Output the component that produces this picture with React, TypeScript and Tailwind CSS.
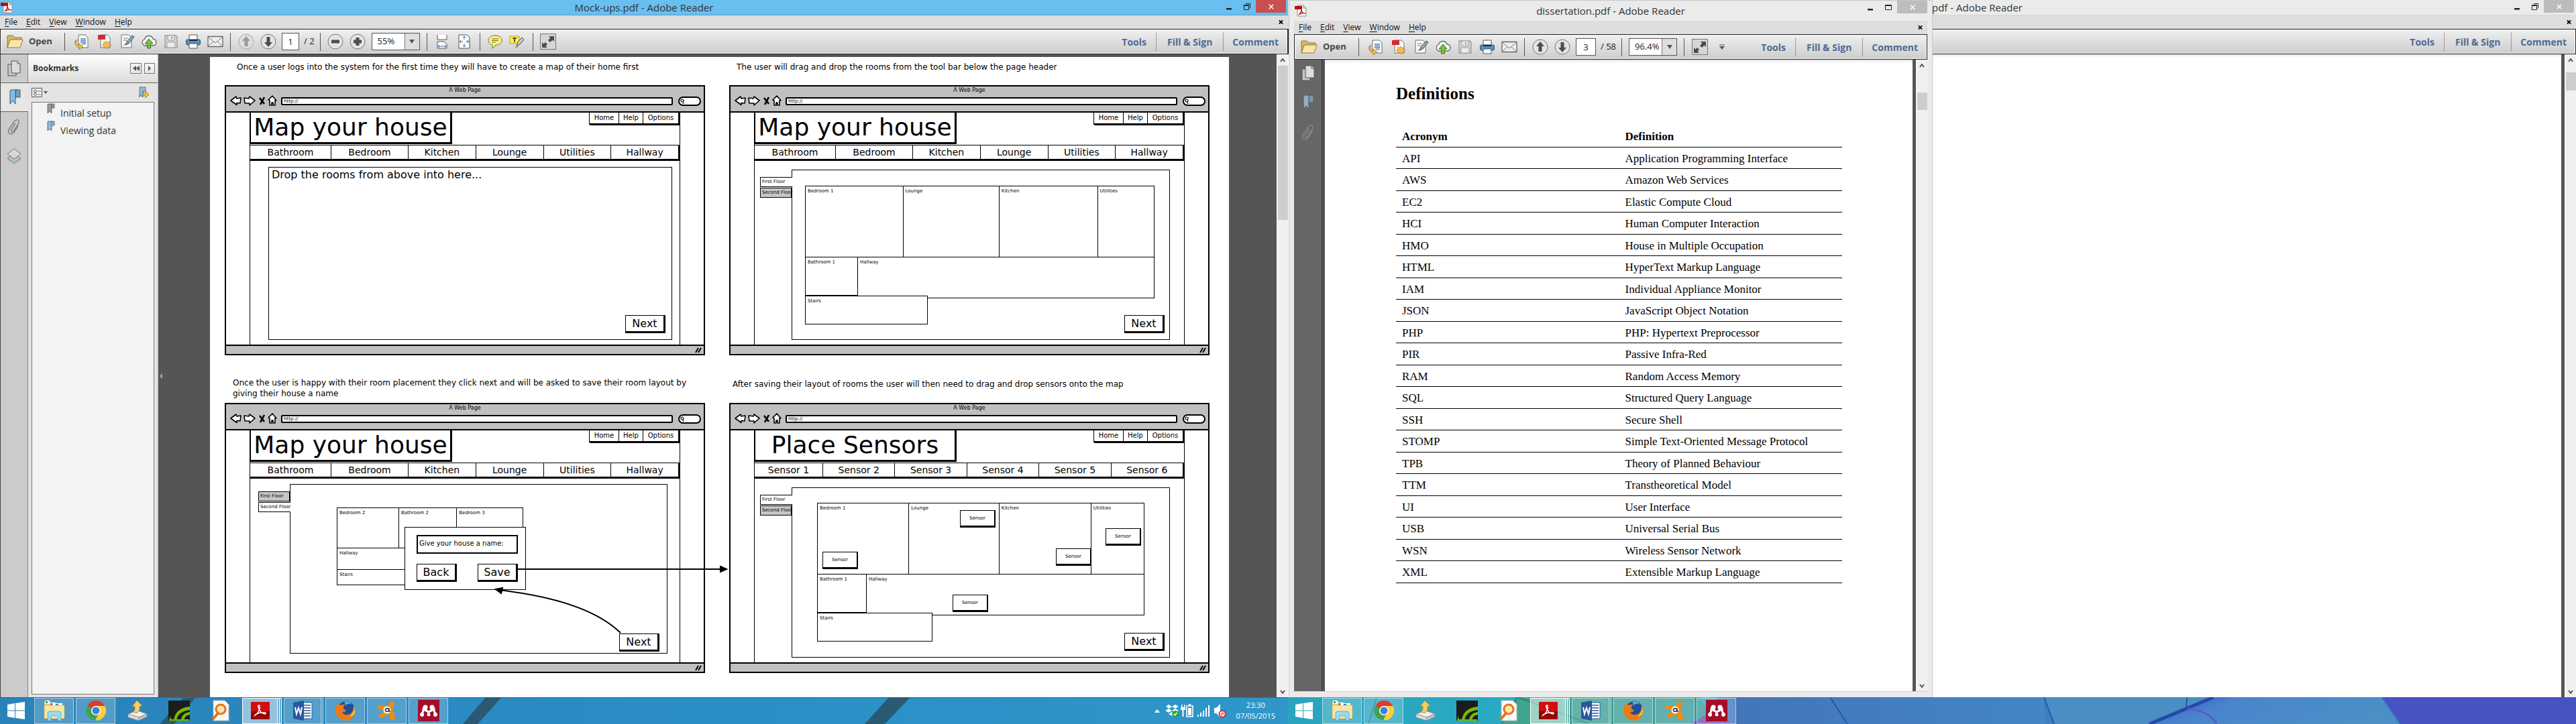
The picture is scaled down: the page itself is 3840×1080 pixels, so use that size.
import type { ReactNode } from "react";

/* ---------- toolbar glyphs ---------- */

const PdfLogo = () => (
  <svg viewBox="0 0 20 18" className="h-[18px] w-5 shrink-0" aria-hidden="true">
    <path d="M5 1h9l4 4v12H5z" fill="#fff" stroke="#8a8a8a" />
    <path d="M14 1v4h4" fill="#ddd" stroke="#8a8a8a" />
    <path d="M1 2h11v5H1z" fill="#b11116" />
    <path d="M7 15c3-2 4-6 4-8 0 3 2 6 6 6-4-1-7 0-10 2z" fill="none" stroke="#c4161c" strokeWidth="1.4" />
  </svg>
);

const Folder = () => (
  <svg viewBox="0 0 26 22" className="h-[22px] w-[26px]" aria-hidden="true">
    <path d="M2 20V3q0-1 1-1h7l3 3h10v4" fill="#d9b95f" stroke="#8e7638" />
    <path d="M2 20 6 9q0-1 1-1h17q1 0 1 1l-4 10q0 1-1 1z" fill="#f7e6ab" stroke="#8e7638" />
  </svg>
);

const Svg = ({ children }: { children: ReactNode }) => (
  <svg viewBox="0 0 24 24" className="h-6 w-6" fill="none" aria-hidden="true">
    {children}
  </svg>
);

const Sheet = ({ x = 6 }: { x?: number }) => (
  <path d={`M${x} 2h10l4 4v15H${x}z`} fill="#fbfbfb" stroke="#6f6f6f" />
);

const Convert = () => (
  <Svg>
    <Sheet />
    <path d="M9 8h8M9 10.500h8M9 13h8M11 15.500h6" stroke="#4a7fb5" strokeWidth="1.500" />
    <path d="M4 9q-4 7 3 9v-3l6 4.500-6 4.500v-3Q-1 19 1 11z" fill="#f3bb4c" stroke="#a8741b" strokeWidth=".8" />
  </Svg>
);
const CreatePdf = () => (
  <Svg>
    <Sheet />
    <rect x="2" y="2" width="11" height="7" fill="#d8292c" />
    <path d="m15 11 1.500 2.500 3-1-.5 3 3 1.500-3 1.500.5 3-3-1L15 23l-1.500-2.500-3 1 .5-3-3-1.500 3-1.500-.5-3 3 1z" fill="#f6bd55" stroke="#b47d20" strokeWidth=".7" />
  </Svg>
);
const Sign = () => (
  <Svg>
    <path d="M4 2h11l4 4v15H4z" fill="#fbfbfb" stroke="#6f6f6f" />
    <path d="M7 7h7M7 10h5M7 18q2-3 4-1" stroke="#777" />
    <path d="m10 17 2-5L20 3l3 2-8 10z" fill="#8fa9bd" stroke="#37474f" />
  </Svg>
);
const Cloud = () => (
  <Svg>
    <path d="M6 18a5 5 0 0 1-.5-9.500A6.500 6.500 0 0 1 18 8a5 5 0 0 1 0 10z" fill="#f6f6f6" stroke="#666" strokeWidth="1.300" />
    <path d="m12 8 6 7h-3.500v7h-5v-7H6z" fill="#7cc142" stroke="#39761a" />
  </Svg>
);
const Floppy = () => (
  <Svg>
    <path d="M3 3h16l2 2v16H3z" fill="#d2d2d2" stroke="#9a9a9a" strokeWidth="1.300" />
    <path d="M7 3h10v7H7zM6 13h12v8H6z" fill="#ebebeb" stroke="#a0a0a0" />
    <path d="M13 5v3" stroke="#999" strokeWidth="2" />
  </Svg>
);
const Printer = () => (
  <Svg>
    <path d="M6 2h12v8H6z" fill="#fff" stroke="#555" />
    <rect x="1.500" y="9" width="21" height="8" rx="2" fill="#5b8fb9" stroke="#2f4f6b" />
    <path d="M6 10h12" stroke="#223" strokeWidth="2" />
    <path d="M6 15h12v7H6z" fill="#fff" stroke="#555" />
  </Svg>
);
const Mail = () => (
  <Svg>
    <path d="M1 4.500h22v15H1z" fill="#efefef" stroke="#686868" strokeWidth="1.300" />
    <path d="m1 5 11 9L23 5M1 19l8-7M23 19l-8-7" stroke="#777" />
  </Svg>
);
const Round = ({ dim = false, children }: { dim?: boolean; children: ReactNode }) => (
  <Svg>
    <circle cx="12" cy="12" r="11" fill={dim ? "#dedede" : "#e4e4e4"} stroke={dim ? "#aaa" : "#777"} />
    <g fill={dim ? "#9b9b9b" : "#4d4d4d"}>{children}</g>
  </Svg>
);
const FitWidth = () => (
  <Svg>
    <path d="M5 2v7h14V2" fill="#fff" stroke="#555" />
    <path d="M5 22V12h10l4 4v6z" fill="#fff" stroke="#555" />
    <path d="M6 19h12M8 17l-2 2 2 2M16 17l2 2-2 2" stroke="#3c5fa6" />
  </Svg>
);
const FitPage = () => (
  <Svg>
    <path d="M4 2h12l4 4v16H4z" fill="#fff" stroke="#555" />
    <path d="M12 4v5M12 15v5M5 12h5M14 12h5M10 6l2-2 2 2M10 18l2 2 2-2M7 10l-2 2 2 2M17 10l2 2-2 2" stroke="#3c5fa6" />
  </Svg>
);
const Bubble = () => (
  <Svg>
    <path d="M12 3c6 0 10 3 10 7.500S18 17 13 17q-2 4-5 5 1-3 0-5c-4-1-6-3-6-6.500C2 6 6 3 12 3z" fill="#fbf08b" stroke="#77722c" />
    <path d="M7 8h10M7 10.500h10M7 13h6" stroke="#77722c" />
  </Svg>
);
const Highlight = () => (
  <Svg>
    <path d="M1 4h14v11H1z" fill="#fff04a" stroke="#aaa13a" />
    <path d="M5 7h6M8 7v6" stroke="#333" strokeWidth="1.600" />
    <path d="m11 19 2-6 6-7 3 3-6 7z" fill="#cfcfcf" stroke="#444" />
    <path d="m9 21 2-2 2 1z" fill="#f3e52c" stroke="#777" strokeWidth=".6" />
  </Svg>
);
const Expand = () => (
  <Svg>
    <rect x=".5" y=".5" width="23" height="23" fill="#d6d6d6" stroke="#777" />
    <path d="M13 4h8v8l-2.500-2.500-3.500 3.500-3-3 3.500-3.500zM11 21H3v-8l2.500 2.500L8 13l3 3-2.500 2.500z" fill="#4a4a4a" />
  </Svg>
);

/* ---------- Adobe Reader window parts ---------- */

const Slot = ({ label, children }: { label: string; children: ReactNode }) => (
  <button aria-label={label} className="flex h-7 w-[33px] shrink-0 items-center justify-center">
    {children}
  </button>
);

const Sep = () => <span className="mx-[6px] h-[27px] w-px shrink-0 bg-[#555]" />;

function TitleBar({ title, look }: { title: string; look: "active" | "covered" | "floating" }) {
  const floating = look === "floating";
  const bar = {
    active: "h-[23px] justify-center border-b border-[#5a9cc4] bg-[#68bff0]",
    covered: "h-[23px] justify-start border-b border-[#d6d6d6] bg-[#ebebeb] pl-[50%]",
    floating: "h-[30px] justify-center bg-[#ebebeb]",
  }[look];
  return (
    <header className={"relative flex shrink-0 items-start text-[15px] text-[#333] " + bar}>
      {look !== "covered" && (
        <span className={"absolute left-0 " + (floating ? "top-[6px]" : "top-[2px]")}>
          <PdfLogo />
        </span>
      )}
      <h1 className={"truncate leading-[22px] " + (floating ? "pt-1" : "")}>{title}</h1>
      <div className={"absolute right-0 top-0 flex h-[19px] " + (floating ? "" : "pr-[3px]")}>
        <button aria-label="Minimise" className="flex w-[27px] items-center justify-center pt-2">
          <svg viewBox="0 0 10 10" className="h-[10px] w-[10px]"><path d="M1 3h8v2.500H1z" fill="#222" /></svg>
        </button>
        <button aria-label="Restore" className="flex w-[27px] items-center justify-center">
          <svg viewBox="0 0 12 12" className="h-3 w-3" fill="none" stroke="#222">
            {floating ? <path d="M1.500 2.500h9v7h-9zM1 3.500h10" /> : <path d="M1.500 3.500h7v7h-7zM1 4.500h8M4 1.500h6.500v7" />}
          </svg>
        </button>
        <button aria-label="Close" className={"flex h-[19px] w-[45px] items-center justify-center text-white " + (look === "active" ? "bg-[#c75050]" : "bg-[#bcbcbc]")}>
          <svg viewBox="0 0 10 10" className="h-2 w-2" stroke="#fff" strokeWidth="1.800"><path d="m1 1 8 8M9 1 1 9" /></svg>
        </button>
      </div>
    </header>
  );
}

function MenuBar({ items = ["File", "Edit", "View", "Window", "Help"] }: { items?: string[] }) {
  return (
    <nav className="flex h-5 shrink-0 items-center justify-between bg-[#dedede] pl-[7px] pr-[7px] text-[12px] text-[#111]">
      <div className="flex gap-[13px]">
        {items.map((m) => (
          <button key={m}>
            <span className="underline underline-offset-2">{m[0]}</span>
            {m.slice(1)}
          </button>
        ))}
      </div>
      <button aria-label="Close document">
        <svg viewBox="0 0 8 8" className="h-2 w-[7px]" stroke="#000" strokeWidth="2"><path d="m1 1 6 6M7 1 1 7" /></svg>
      </button>
    </nav>
  );
}

function ToolBar({ page, pages, zoom, compact = false }: { page: string; pages: string; zoom: string; compact?: boolean }) {
  return (
    <div className="flex h-[38px] shrink-0 items-center justify-between border border-[#222] bg-linear-to-b from-[#f0f0f0] to-[#cdcdcd] text-[14px] text-[#222] shadow-[inset_0_0_0_1px_#fafafa]">
      <div className="flex items-center">
        <button className="flex w-[89px] items-center gap-2 pl-[8px] text-[13px] font-bold text-[#444]">
          <Folder />
          Open
        </button>
        <Sep />
        <span className="w-[3px]" />
        <Slot label="Convert"><Convert /></Slot>
        <Slot label="Create PDF"><CreatePdf /></Slot>
        <Slot label="Sign"><Sign /></Slot>
        <Slot label="Upload"><Cloud /></Slot>
        <Slot label="Save file"><Floppy /></Slot>
        <Slot label="Print"><Printer /></Slot>
        <Slot label="Email"><Mail /></Slot>
        <Sep />
        <Slot label="Previous page"><Round dim={!compact}><path d="m12 4 6 7h-3.500v8h-5v-8H6z" /></Round></Slot>
        <Slot label="Next page"><Round><path d="m12 20 6-7h-3.500V5h-5v8H6z" /></Round></Slot>
        <input
          aria-label="Page number"
          defaultValue={page}
          className={"ml-1 h-[26px] border border-[#555] bg-white text-center text-[13px] " + (compact ? "w-[30px]" : "w-[26px]")}
        />
        <span className="ml-[7px] mr-[2px] text-[13px]">/ {pages}</span>
        <Sep />
        {!compact && (
          <>
            <Slot label="Zoom out"><Round><path d="M6 9.500h12v5H6z" /></Round></Slot>
            <Slot label="Zoom in"><Round><path d="M6 9.500h3.500V6h5v3.500H18v5h-3.500V18h-5v-3.500H6z" /></Round></Slot>
          </>
        )}
        <div className="relative mx-1 flex h-[26px] w-[72px] border border-[#555] bg-white">
          <select aria-label="Zoom level" defaultValue={zoom} className="w-full appearance-none bg-transparent pl-2 text-[13px]">
            <option>{zoom}</option>
          </select>
          <span className="pointer-events-none absolute inset-y-0 right-0 flex w-[22px] items-center justify-center border-l border-[#777] bg-[#dedede]">
            <svg viewBox="0 0 8 6" className="h-[6px] w-2"><path d="M0 0h8L4 6z" fill="#555" /></svg>
          </span>
        </div>
        <Sep />
        {!compact && (
          <>
            <Slot label="Fit width"><FitWidth /></Slot>
            <Slot label="Fit page"><FitPage /></Slot>
            <Sep />
            <Slot label="Add comment"><Bubble /></Slot>
            <Slot label="Highlight text"><Highlight /></Slot>
            <Sep />
          </>
        )}
        <Slot label="Read mode"><Expand /></Slot>
        {compact && (
          <Slot label="More tools">
            <svg viewBox="0 0 8 8" className="h-2 w-2"><path d="M0 .5h8v1H0zM0 3h8L4 8z" fill="#555" /></svg>
          </Slot>
        )}
      </div>
      <Panes />
    </div>
  );
}

function Panes() {
  return (
    <div className="flex h-[27px] items-center divide-x divide-dotted divide-[#555] text-[14px] font-bold text-[#4d6a94]">
      <button className="h-full px-[14px]">Tools</button>
      <button className="h-full px-4">Fill &amp; Sign</button>
      <button className="h-full px-[13px]">Comment</button>
    </div>
  );
}

const Chevron = ({ up = false }: { up?: boolean }) => (
  <svg viewBox="0 0 8 6" className="h-[6px] w-2" fill="none" stroke="#555" strokeWidth="2">
    <path d={up ? "M1 5 4 1l3 4" : "m1 1 3 4 3-4"} />
  </svg>
);

function ScrollBar({ thumb }: { thumb: string }) {
  return (
    <div className="flex w-[17px] shrink-0 flex-col items-center border-l border-white bg-[#f0f0f0]">
      <div className="flex h-[17px] items-center"><Chevron up /></div>
      <div className={"w-[15px] bg-[#cdcdcd] " + thumb} />
      <div className="mt-auto flex h-[17px] items-center"><Chevron /></div>
    </div>
  );
}

const PagesIcon = () => (
  <svg viewBox="0 0 24 24" className="h-6 w-6" fill="#ddd" stroke="#555">
    <path d="M3 6h12v17H3z" fill="#c8c8c8" /><path d="M8 1h9l4 4v14H8z" /><path d="M17 1v4h4" />
  </svg>
);
const RibbonIcon = ({ muted = false }: { muted?: boolean }) => (
  <svg viewBox="0 0 20 24" className="h-6 w-5" stroke={muted ? "#4a5a66" : "#3d5a73"}>
    <path d="M11 1h7v11h-7z" fill={muted ? "#7b97a8" : "#6fa0c4"} />
    <path d="M3 3q0-2 2-2h8q-2 0-2 2v19l-4-5-4 5z" fill={muted ? "#93adbd" : "#8cbbdc"} />
  </svg>
);
const ClipIcon = () => (
  <svg viewBox="0 0 24 24" className="h-6 w-6" fill="none" stroke="#858585" strokeWidth="1.600">
    <path d="M14 7 8 16q-1 3 1 3.500 2 0 3-2l6.500-10Q20 3 17.500 2q-3-1-5 2L5 15q-3 5 0 7 4 2 7-2l6-9" />
  </svg>
);
const LayersIcon = () => (
  <svg viewBox="0 0 24 24" className="h-6 w-6" stroke="#777">
    <path d="m12 8 10 7.500L12 23 2 15.500z" fill="#a9c3d4" /><path d="m12 1 10 7.500L12 16 2 8.500z" fill="#d8d8d8" />
  </svg>
);

const MiniRibbon = ({ fill }: { fill: string }) => (
  <svg viewBox="0 0 12 16" className="h-4 w-3" stroke="#555" strokeWidth=".8">
    <path d="M6 1h5v6H6z" fill={fill} /><path d="M1 2q0-1 1-1h5v14l-3-3-3 3z" fill={fill} />
  </svg>
);

function Bookmarks() {
  return (
    <aside className="flex w-[236px] shrink-0">
      <div className="flex w-[42px] flex-col items-center border-l border-[#444] bg-[#cbcbcb]">
        <button aria-label="Page thumbnails" className="flex h-[42px] w-full items-center justify-center border-r border-[#888]"><PagesIcon /></button>
        <button aria-label="Bookmarks" className="flex h-[44px] w-full items-center justify-center border-y border-[#666] bg-[#e6e6e6]"><RibbonIcon /></button>
        <div className="flex w-full flex-1 flex-col items-center gap-5 border-r border-[#888] pt-[10px]">
          <button aria-label="Attachments"><ClipIcon /></button>
          <button aria-label="Layers"><LayersIcon /></button>
        </div>
      </div>
      <div className="flex flex-1 flex-col border-r border-[#bbb] bg-[#e4e4e4] pb-1">
        <div className="flex h-[43px] items-center justify-between border-b border-[#666] bg-linear-to-b from-white to-[#dcdcdc] pl-[7px] pr-[4px]">
          <h2 className="text-[12px] font-bold text-[#333]">Bookmarks</h2>
          <div className="flex gap-1">
            <button aria-label="Collapse" className="flex h-4 w-[17px] items-center justify-center border border-[#777]">
              <svg viewBox="0 0 10 8" className="h-2 w-[10px]"><path d="M5 0v8L0 4zM10 0v8L5 4z" fill="#555" /></svg>
            </button>
            <button aria-label="Expand" className="flex h-4 w-4 items-center justify-center border border-[#777]">
              <svg viewBox="0 0 6 8" className="h-2 w-[6px]"><path d="M1 0v8l4-4z" fill="#555" /></svg>
            </button>
          </div>
        </div>
        <div className="flex h-[28px] items-center justify-between pl-[5px] pr-3">
          <button aria-label="Options">
            <svg viewBox="0 0 24 16" className="h-4 w-6" fill="none" stroke="#555">
              <path d="M.5 1.500h15v13H.5z" fill="#f4f4f4" /><path d="M9 6h5M9 11h5" /><circle cx="5.500" cy="6" r="2" /><circle cx="5.500" cy="10.500" r="2" /><path d="M18 6h6l-3 4z" fill="#555" stroke="none" />
            </svg>
          </button>
          <button aria-label="Find bookmark">
            <svg viewBox="0 0 18 18" className="h-[18px] w-[18px]" stroke="#456" strokeWidth=".8">
              <path d="M3 1h9v6H8v9l-3-3-2 3z" fill="#8cbbdc" /><path d="M9 6v4h3v-3l5 5-5 5v-3H8z" fill="#f3bb4c" stroke="#a8741b" />
            </svg>
          </button>
        </div>
        <ul className="mx-[5px] flex-1 border border-[#777] bg-[#f3f3f3] pt-[2px] text-[14px] text-[#333]">
          <li className="flex h-[26px] items-center gap-2 pl-[22px]"><span className="mb-3"><MiniRibbon fill="#9a9a9a" /></span><a href="#setup">Initial setup</a></li>
          <li className="flex h-[26px] items-center gap-2 pl-[22px]"><span className="mb-3"><MiniRibbon fill="#8cbbdc" /></span><a href="#viewing">Viewing data</a></li>
        </ul>
      </div>
    </aside>
  );
}

/* ---------- wireframes on the first document ---------- */

const SketchButton = ({ children, className = "" }: { children: ReactNode; className?: string }) => (
  <button className={"h-[27px] w-[60px] border border-r-[3px] border-b-[3px] border-black bg-white text-center text-[16px] leading-[22px] " + className}>
    {children}
  </button>
);

function Frame({ title, tabs, children }: { title: string; tabs: [string, string][]; children: ReactNode }) {
  return (
    <section className="relative flex h-[403px] flex-col border-2 border-black bg-white">
      <div className="h-[39px] shrink-0 border-b-2 border-black bg-[#c0c0c0]">
        <p className="h-[12px] pt-[1px] text-center text-[8px] leading-[10px]">A Web Page</p>
        <div className="flex items-center pl-[6px] pr-1">
          <svg viewBox="0 0 72 16" className="h-4 w-[72px] shrink-0" fill="#fff" stroke="#000" strokeWidth="1.600" strokeLinejoin="round">
            <path d="m1 8 8-6 1 3 6-1-1 8-5-.5v3zM37 8l-8-6-1 3-7-1 1 8h7v3z" />
            <path d="m44 4 7 9M51 3l-6 11" strokeWidth="2.600" />
            <path d="m57 7 6-6 6 7h-2v7h-3v-4h-2v4h-3V8z" />
          </svg>
          <input aria-label="Address" defaultValue="http://" className="mt-[3px] ml-1 h-3 min-w-0 flex-1 rounded-[2px] border-2 border-black bg-white px-[2px] text-[7px] leading-[8px]" />
          <div className="mt-[3px] ml-2 flex h-[14px] w-[34px] items-center rounded-[7px] border-2 border-black bg-white">
            <svg viewBox="0 0 8 8" className="h-2 w-2" fill="none" stroke="#000" strokeWidth="1.200"><circle cx="4" cy="3" r="2" /><path d="m5 5 1 3" /></svg>
          </div>
        </div>
      </div>
      <div className="flex min-h-0 flex-1">
        <div className="w-[36px] border-r border-black" />
        <div className="flex flex-1 flex-col">
          <div className="flex items-start justify-between">
            <h3 className="h-[47px] w-[301px] border-r-[3px] border-b-[3px] border-l border-black text-center text-[36px] leading-[43px]">{title}</h3>
            <nav className="flex h-[19px] w-[135px] divide-x divide-black rounded-bl-[3px] border-r-2 border-b-[3px] border-l border-black text-[10px] leading-4">
              <button className="w-[44px]">Home</button>
              <button className="w-[36px]">Help</button>
              <button className="flex-1">Options</button>
            </nav>
          </div>
          <nav className="mt-[1px] flex h-6 divide-x divide-black border-t border-r-2 border-b-[3px] border-black text-[14px] leading-5">
            {tabs.map(([t, w]) => (
              <button key={t} className={w}>{t}</button>
            ))}
          </nav>
          <div className="relative flex min-h-0 flex-1">{children}</div>
        </div>
        <div className="w-[36px] border-l border-black" />
      </div>
      <div className="flex h-[14px] shrink-0 items-center justify-end border-t-2 border-black bg-[#c0c0c0] pr-[3px]">
        <svg viewBox="0 0 10 8" className="h-2 w-[10px]" stroke="#000" strokeWidth="2"><path d="m1 8 4-7M5 8l4-7" /></svg>
      </div>
    </section>
  );
}

const roomTabs: [string, string][] = [
  ["Bathroom", "w-[121px]"],
  ["Bedroom", "w-[115px]"],
  ["Kitchen", "flex-1"],
  ["Lounge", "flex-1"],
  ["Utilities", "flex-1"],
  ["Hallway", "flex-1"],
];
const sensorTabs: [string, string][] = [
  ["Sensor 1", "w-[102px]"],
  ["Sensor 2", "flex-1"],
  ["Sensor 3", "flex-1"],
  ["Sensor 4", "flex-1"],
  ["Sensor 5", "flex-1"],
  ["Sensor 6", "flex-1"],
];

function FloorTabs({ second = false }: { second?: boolean }) {
  const on = "bg-white border-r-0 z-10 -mr-px";
  const off = "bg-[#c6c6c6]";
  return (
    <div className="flex w-[47px] flex-col gap-px pt-[11px] text-[7px]">
      <button className={"relative h-[15px] border border-black pl-[2px] text-left whitespace-nowrap " + (second ? off : on)}>First Floor</button>
      <button className={"relative h-[15px] border border-black pl-[2px] text-left whitespace-nowrap " + (second ? on : off)}>Second Floor</button>
    </div>
  );
}

const Room = ({ name, className }: { name: string; className: string }) => (
  <div className={"-mt-px -ml-px border border-black bg-white pt-[3px] pl-[3px] text-[7px] leading-[8px] " + className}>{name}</div>
);

function GroundFloor({ narrow = false, children }: { narrow?: boolean; children?: ReactNode }) {
  return (
    <div className="relative">
      <div className="flex h-[106px]">
        <Room name="Bedroom 1" className="flex-[146]" />
        <Room name="Lounge" className="flex-[144]" />
        <Room name="Kitchen" className="flex-[147]" />
        <Room name="Utilities" className="flex-[83]" />
      </div>
      <div className="flex items-start">
        <Room name="Bathroom 1" className={"h-[58px] " + (narrow ? "w-[74px]" : "w-[79px]")} />
        <Room name="Hallway" className="h-[62px] flex-1" />
      </div>
      <div className="relative -mt-1">
        <Room name="Stairs" className={"h-[43px] " + (narrow ? "w-[172px]" : "w-[183px]")} />
      </div>
      {children}
    </div>
  );
}

const sensorSpots = ["left-[7px] top-[72px]", "left-[212px] top-[10px]", "left-[355px] top-[67px]", "left-[429px] top-[37px]", "left-[201px] top-[136px]"];

const Caption = ({ children, className }: { children: ReactNode; className: string }) => (
  <p className={"text-[12px] leading-4 " + className}>{children}</p>
);

function MockupPage() {
  return (
    <main className="mt-1 grid flex-1 grid-cols-2 content-start gap-x-9 overflow-hidden bg-white pr-[29px] pl-[22px] font-['DejaVu_Sans',sans-serif] text-black">
      <div>
        <Caption className="h-[42px] pt-[7px] pl-[18px]">Once a user logs into the system for the first time they will have to create a map of their home first</Caption>
        <Frame title="Map your house" tabs={roomTabs}>
          <div className="mt-[9px] mr-[11px] mb-[7px] ml-[27px] flex-1 border border-black px-[4px] py-px text-[16px] leading-5">
            Drop the rooms from above into here...
          </div>
          <SketchButton className="absolute right-[21px] bottom-[17px]">Next</SketchButton>
        </Frame>
      </div>
      <div>
        <Caption className="h-[42px] pt-[7px] pl-[11px]">The user will drag and drop the rooms from the tool bar below the page header</Caption>
        <Frame title="Map your house" tabs={roomTabs}>
          <div className="flex flex-1 pt-[13px] pr-[21px] pb-[7px] pl-[8px]">
            <FloorTabs />
            <div className="flex-1 border border-black pt-6 pr-[22px] pl-5">
              <GroundFloor />
            </div>
          </div>
          <SketchButton className="absolute right-[29px] bottom-[17px]">Next</SketchButton>
        </Frame>
      </div>
      <div>
        <Caption className="h-[71px] overflow-hidden pt-[33px] pl-[12px]">
          Once the user is happy with their room placement they click next and will be asked to save their room layout by giving their house a name
        </Caption>
        <div className="relative">
          <Frame title="Map your house" tabs={roomTabs}>
            <div className="flex flex-1 pt-[8px] pr-[18px] pb-[13px] pl-[12px]">
              <FloorTabs second />
              <div className="flex-1 border border-black pt-[35px] pl-[70px]">
                <div className="w-[277px]">
                  <div className="flex h-[60px]">
                    <Room name="Bedroom 2" className="flex-[92]" />
                    <Room name="Bathroom 2" className="flex-[86]" />
                    <Room name="Bedroom 3" className="flex-[99]" />
                  </div>
                  <Room name="Hallway" className="h-[33px]" />
                  <Room name="Stairs" className="h-[24px]" />
                </div>
              </div>
            </div>
            <SketchButton className="absolute right-[30px] bottom-[16px]">Next</SketchButton>
            <div role="dialog" aria-label="Name your house" className="absolute top-[72px] left-[230px] flex h-[94px] w-[181px] flex-col justify-between border border-black bg-white py-[11px] pr-[11px] pl-[17px]">
              <input aria-label="House name" defaultValue="Give your house a name:" className="h-[28px] border-2 border-black px-[2px] pb-1 text-[10px]" />
              <div className="flex justify-between">
                <SketchButton>Back</SketchButton>
                <SketchButton>Save</SketchButton>
              </div>
            </div>
          </Frame>
          <svg viewBox="0 0 716 403" className="pointer-events-none absolute top-0 left-0 z-10 h-[403px] w-[716px] overflow-visible" fill="none" stroke="#000" strokeWidth="2">
            <path d="M437 248h306" />
            <path d="m739 244 9 4-9 4z" fill="#000" />
            <path d="M590 343Q540 294 408 279" />
            <path d="m404 278 10-2-2 8z" fill="#000" />
          </svg>
        </div>
      </div>
      <div>
        <Caption className="h-[71px] pt-[35px] pl-[5px]">After saving their layout of rooms the user will then need to drag and drop sensors onto the map</Caption>
        <Frame title="Place Sensors" tabs={sensorTabs}>
          <div className="flex flex-1 pt-[13px] pr-[21px] pb-[7px] pl-[8px]">
            <FloorTabs />
            <div className="flex-1 border border-black pt-[23px] pr-[37px] pl-[38px]">
              <GroundFloor narrow>
                {sensorSpots.map((spot) => (
                  <button key={spot} className={"absolute h-[26px] w-[53px] border border-r-2 border-b-[3px] border-black bg-white text-[7px] " + spot}>
                    Sensor
                  </button>
                ))}
              </GroundFloor>
            </div>
          </div>
          <SketchButton className="absolute right-[29px] bottom-[17px]">Next</SketchButton>
        </Frame>
      </div>
    </main>
  );
}

/* ---------- dissertation document ---------- */

const terms: [string, string][] = [
  ["API", "Application Programming Interface"],
  ["AWS", "Amazon Web Services"],
  ["EC2", "Elastic Compute Cloud"],
  ["HCI", "Human Computer Interaction"],
  ["HMO", "House in Multiple Occupation"],
  ["HTML", "HyperText Markup Language"],
  ["IAM", "Individual Appliance Monitor"],
  ["JSON", "JavaScript Object Notation"],
  ["PHP", "PHP: Hypertext Preprocessor"],
  ["PIR", "Passive Infra-Red"],
  ["RAM", "Random Access Memory"],
  ["SQL", "Structured Query Language"],
  ["SSH", "Secure Shell"],
  ["STOMP", "Simple Text-Oriented Message Protocol"],
  ["TPB", "Theory of Planned Behaviour"],
  ["TTM", "Transtheoretical Model"],
  ["UI", "User Interface"],
  ["USB", "Universal Serial Bus"],
  ["WSN", "Wireless Sensor Network"],
  ["XML", "Extensible Markup Language"],
];

function DissertationPage() {
  return (
    <main className="flex-1 bg-linear-to-b from-[#e4e4e4] to-white to-[5px] pt-[35px] pr-[105px] pl-[106px] font-['Liberation_Serif',serif] text-black">
      <h2 className="text-[25px] leading-8 font-bold">Definitions</h2>
      <table className="mt-[30px] w-full border-collapse text-left text-[17px] leading-5">
        <thead>
          <tr className="h-[33px] border-b border-black">
            <th className="w-1/2 pt-[3px] pl-[9px]">Acronym</th>
            <th className="w-1/2 pt-[3px] pl-[9px]">Definition</th>
          </tr>
        </thead>
        <tbody>
          {terms.map(([a, d]) => (
            <tr key={a} className="border-b border-black odd:h-[32px] even:h-[33px]">
              <td className="pt-[3px] pl-[9px]">{a}</td>
              <td className="pt-[3px] pl-[9px]">{d}</td>
            </tr>
          ))}
        </tbody>
      </table>
    </main>
  );
}

/* ---------- taskbar ---------- */

const Tile = ({ label, state = "idle", children }: { label: string; state?: "idle" | "open" | "active" | "stacked"; children: ReactNode }) => {
  const face = { idle: "", open: "border border-white/50 bg-white/20", active: "border border-white bg-white/50", stacked: "border border-white/50 bg-white/20" }[state];
  const stacked = state === "active" || state === "stacked";
  return (
    <button aria-label={label} className="flex h-[39px] w-[59px]">
      <span className={"flex h-full flex-1 items-center justify-center " + face}>
        <svg viewBox="0 0 32 32" className="h-8 w-8" aria-hidden="true">{children}</svg>
      </span>
      {stacked && <span className={"h-full w-[3px] border-y border-r " + (state === "active" ? "border-white bg-white/30" : "border-white/50 bg-white/20")} />}
      {state === "active" && <span className="h-full w-[3px] border-y border-r border-white bg-white/30" />}
    </button>
  );
};

function Launchers() {
  return (
    <div className="relative flex items-center gap-[3px]">
      <button aria-label="Start" className="flex h-10 w-12 items-center justify-center">
        <svg viewBox="0 0 26 26" className="h-[26px] w-[26px]" fill="#fff"><path d="m0 4 11-2v10.500H0zM12 2l14-2v12.500H12zM0 13.500h11V24L0 22zM12 13.500h14V26l-14-2z" /></svg>
      </button>
      <Tile label="File Explorer" state="open">
        <path d="M1 3h9l2 2v20H1z" fill="#e8cf7c" /><path d="M2 1h7v5H2z" fill="#fff" /><path d="M3 2h3v3H3z" fill="#3aa648" />
        <path d="M9 4h9v6H9z" fill="#fff" /><path d="M10 5h3v3h-3z" fill="#c33" /><path d="M16 5h12v6H16z" fill="#fff" /><path d="M18 6h4v2h-4z" fill="#2b78c5" />
        <path d="M1 8h30v19q0 1-1 1H2q-1 0-1-1z" fill="#f7e7a2" stroke="#caa94e" strokeWidth=".6" />
        <path d="M6 31V20q0-3 3-3h14q3 0 3 3v11h-5v-7H11v7z" fill="#9bd8f2" stroke="#4d9dc2" strokeWidth=".7" />
      </Tile>
      <Tile label="Chrome" state="open">
        <circle cx="16" cy="16" r="14.500" fill="#3fa34d" />
        <path d="M16 16 3.500 8.500A14.500 14.500 0 0 1 29.200 9z" fill="#dd3c2e" />
        <path d="M16 9h13.200A14.500 14.500 0 0 1 15 30.500L22 17z" fill="#fbcf3a" /><circle cx="16" cy="16" r="7" fill="#fff" /><circle cx="16" cy="16" r="5.500" fill="#3f82d8" />
      </Tile>
      <Tile label="Drive">
        <path d="m2 21 14-5 14 5-12 5z" fill="#f1f1f1" stroke="#8d8d8d" /><path d="m2 21 16 5v5L2 26z" fill="#dcdcdc" stroke="#8d8d8d" strokeWidth=".7" /><path d="M30 21v4l-12 6v-5z" fill="#c2c2c2" stroke="#8d8d8d" strokeWidth=".7" />
        <path d="M15 1l8 8-4 .5q1 7-4 10-4 0-5-2 3-2 2-8L8 10z" fill="#f5cf68" stroke="#bb8d2b" />
      </Tile>
      <Tile label="NVIDIA">
        <path d="M0 1h32v30H0z" fill="#1c1c1c" /><path d="M32 10Q10 12 8 31h4q2-14 20-16zM32 18q-13 2-13 13h4q1-8 9-9zM2 24l3 7H2z" fill="#76b900" /><path d="M1 30h30" stroke="#76b900" strokeWidth="2" />
      </Tile>
      <Tile label="Search">
        <path d="M5 1h17l6 6v24H5z" fill="#fafafa" stroke="#bbb" /><circle cx="16" cy="14" r="7" fill="#ffe3ad" stroke="#e2761b" strokeWidth="3" /><path d="m12 20-8 9" stroke="#e2761b" strokeWidth="4" />
      </Tile>
      <Tile label="Adobe Reader" state="active">
        <path d="M2 3h28v26H2z" fill="#d60d0d" /><path d="M2 17h28v12H2z" fill="#980606" />
        <path d="M8 23c5-3 8-9 7-14-1-2-3-1-2 2 2 6 6 10 10 10 3-1 0-3-4-2-5 0-10 2-11 4z" fill="none" stroke="#fff" strokeWidth="1.600" />
      </Tile>
      <Tile label="Word" state="stacked">
        <path d="M16 4h14v24H16z" fill="#fff" stroke="#2b569a" /><path d="M18 8h10M18 12h10M18 16h10M18 20h10M18 24h10" stroke="#2b569a" strokeWidth="1.500" />
        <path d="m2 4 16-3v30L2 28z" fill="#2b569a" /><path d="m5 11 2 10 3-9 3 9 2-10" fill="none" stroke="#fff" strokeWidth="2" />
      </Tile>
      <Tile label="Firefox" state="open">
        <circle cx="17" cy="15" r="13" fill="#1f4f96" /><path d="M14 3q8-2 11 4-6-3-8 1z" fill="#5cb3e6" />
        <path d="M4 5q-5 9-2 16 4 9 14 10 12 0 14-13 1-6-2-10 1 12-8 14-7 1-9-4 5 1 6-3-5 0-4-5l3-3q-4-1-6 1-4-1-6-3z" fill="#ec7a16" /><path d="M28 9q1 12-7 16 8 0 9-7z" fill="#fbc32c" />
      </Tile>
      <Tile label="Avast" state="open">
        <g fill="none" stroke="#f58a0b" strokeLinecap="round">
          <path d="m23 6-4 9" strokeWidth="8" />
          <path d="M19 16q3 2 5 10" strokeWidth="8" />
          <path d="M17 14Q11 11 5 11" strokeWidth="6" />
          <path d="M17 16q-4 6-10 8" strokeWidth="6" />
        </g>
        <circle cx="16" cy="15" r="5.500" fill="#fff" /><circle cx="16" cy="15" r="2.500" fill="none" stroke="#333" strokeWidth="1.500" /><path d="M19 12v5h2" fill="none" stroke="#333" strokeWidth="1.300" />
      </Tile>
      <Tile label="Mendeley" state="open">
        <path d="M0 0h32v32H0z" fill="#a60c27" /><circle cx="11" cy="11" r="3.500" fill="#fff" /><circle cx="21" cy="11" r="3.500" fill="#fff" />
        <path d="M5 21q3-2 3-7l8 4 8-4q0 5 3 7M11 14l5 5 5-5" fill="none" stroke="#fff" strokeWidth="3" /><circle cx="6" cy="22" r="3" fill="#fff" /><circle cx="16" cy="22" r="2.500" fill="#fff" /><circle cx="26" cy="22" r="3" fill="#fff" />
      </Tile>
    </div>
  );
}

function TaskbarLeft() {
  return (
    <footer className="relative flex h-10 shrink-0 items-center justify-between bg-linear-to-r from-[#2a82b8] via-[#2a8dc6] to-[#2e97c8] text-white">
      <svg viewBox="0 0 1920 40" preserveAspectRatio="none" className="absolute inset-0 h-full w-full" aria-hidden="true">
        <path d="M274 0h18l-32 40h-22zM724 0h24l-36 40h-22zM1325 0h32l-38 40h-30z" fill="#2a5a73" />
        <path d="M0 .5h1920" stroke="#216f9d" />
      </svg>
      <Launchers />
      <div className="relative flex items-center pr-[19px]">
        <svg viewBox="0 0 110 24" className="h-6 w-[110px]" fill="#fff" aria-hidden="true">
          <path d="m0 15 4-5 4 5z" />
          <path d="m21 3 5 3-4 3-5-3zM31 3l5 3-5 3-5-3zM21 15l-5-3 5-3 5 3zM31 15l5-3-5-3-5 3zM21 17l5 3 5-3-5-3z" /><circle cx="31" cy="17" r="5" fill="#2fa23a" /><path d="m28.500 17 2 2 3-4" stroke="#fff" fill="none" strokeWidth="1.400" />
          <path d="M48 5h9v16h-9z" fill="none" stroke="#fff" strokeWidth="1.600" /><path d="M50 8h5v11h-5zM51 2h3v3h-3zM40 3h1.500v4H40zM44 3h1.500v4H44zM39 7h7v4h-2.500v10h-2V11H39z" />
          <path d="M64 18h2v3h-2zM68 15h2v6h-2zM72 12h2v9h-2zM76 8h2v13h-2zM80 4h2v17h-2z" />
          <path d="M89 8h3l6-6v20l-6-6h-3z" /><circle cx="101" cy="17" r="5.500" fill="#e02424" /><circle cx="101" cy="17" r="3" fill="none" stroke="#fff" strokeWidth="1.300" /><path d="m99 15 4 4" stroke="#fff" strokeWidth="1.300" />
        </svg>
        <time className="ml-3 text-center text-[11px] leading-4">23:30<br />07/05/2015</time>
      </div>
    </footer>
  );
}

function TaskbarRight() {
  return (
    <footer className="relative flex h-10 shrink-0 items-center bg-[#3f7cc0]">
      <svg viewBox="0 0 1920 40" preserveAspectRatio="none" className="absolute inset-0 h-full w-full" aria-hidden="true">
        <defs>
          <linearGradient id="teal"><stop offset="0" stopColor="#2aa3bd" /><stop offset="1" stopColor="#2bb0cb" /></linearGradient>
          <linearGradient id="green"><stop offset="0" stopColor="#3fa68c" /><stop offset="1" stopColor="#3a9aa0" /></linearGradient>
          <linearGradient id="blue"><stop offset="0" stopColor="#4474b8" /><stop offset="1" stopColor="#4286c6" /></linearGradient>
          <linearGradient id="fold" x1="0" y1="0" x2="1" y2=".3"><stop offset="0" stopColor="#2f55b8" /><stop offset=".35" stopColor="#4a84cc" /><stop offset="1" stopColor="#4a90c6" /></linearGradient>
        </defs>
        <path d="M0 0h640v40H0z" fill="url(#teal)" />
        <path d="M342 0h270l30 40H318z" fill="url(#green)" />
        <path d="M342 0 450 40M132 0l-12 40M342 0l-24 40" stroke="#2d7f8f" strokeWidth="2" />
        <path d="m660 0-30 40h500l-4-40z" fill="url(#blue)" />
        <path d="m600 40 40-24 20 24z" fill="#6b54b4" />
        <path d="M1126 0h260l-98 40h-145z" fill="#4a8ec4" />
        <path d="M1386 0h246l26 40h-372z" fill="url(#fold)" />
        <path d="M1630 0h290v40h-263z" fill="#4852c2" />
        <path d="m808 0 26 40M1127 0l15 40M1340 0l-1 16" stroke="#2a56ad" strokeWidth="2" fill="none" />
        <path d="m1380 0-96 40" stroke="#2449a8" strokeWidth="5" />
        <path d="M1342 17q32 4 42 23" stroke="#5560c8" strokeWidth="3" fill="none" />
        <path d="m1631 0 27 40" stroke="#3a6ad0" strokeWidth="2" />
      </svg>
      <Launchers />
    </footer>
  );
}

/* ---------- desktops ---------- */

export default function App() {
  return (
    <div className="grid h-screen grid-cols-2 overflow-hidden bg-white font-['Open_Sans','Noto_Sans',sans-serif]">
      <div className="flex min-h-0 min-w-0 flex-col">
        <TitleBar title="Mock-ups.pdf - Adobe Reader" look="active" />
        <MenuBar />
        <ToolBar page="1" pages="2" zoom="55%" />
        <div className="flex min-h-0 flex-1 bg-[#555]">
          <Bookmarks />
          <div className="flex w-[77px] shrink-0 items-center pl-[2px]">
            <svg viewBox="0 0 5 8" className="h-2 w-[5px]"><path d="M4 0v8L0 4z" fill="#aaa" /></svg>
          </div>
          <MockupPage />
          <div className="w-[71px] shrink-0" />
          <ScrollBar thumb="h-[230px]" />
        </div>
        <TaskbarLeft />
      </div>
      <div className="relative flex min-h-0 min-w-0 flex-col">
        <TitleBar title="pdf - Adobe Reader" look="covered" />
        <MenuBar items={[]} />
        <div className="flex h-[38px] shrink-0 items-center justify-end border border-[#222] bg-linear-to-b from-[#f0f0f0] to-[#cdcdcd] shadow-[inset_0_0_0_1px_#fafafa]">
          <Panes />
        </div>
        <div className="flex min-h-0 flex-1 bg-[#555]">
          <div className="mr-[5px] flex-1 bg-linear-to-b from-[#e4e4e4] to-white to-[5px]" />
          <ScrollBar thumb="mt-[10px] h-[27px]" />
        </div>
        <TaskbarRight />
        <div className="absolute top-0 bottom-10 left-px flex w-1/2 flex-col border-t border-r border-l border-[#c8c8c8] bg-[#ebebeb] px-[7px] pb-2">
          <TitleBar title="dissertation.pdf - Adobe Reader" look="floating" />
          <MenuBar />
          <ToolBar page="3" pages="58" zoom="96.4%" compact />
          <div className="flex min-h-0 flex-1 border-b border-[#d0d0d0] bg-[#555]">
            <div className="mr-1 flex w-[42px] flex-col items-center gap-5 border-r border-[#333] bg-[#666] pt-2">
              <button aria-label="Page thumbnails"><PagesIcon /></button>
              <button aria-label="Bookmarks"><RibbonIcon muted /></button>
              <button aria-label="Attachments"><ClipIcon /></button>
            </div>
            <DissertationPage />
            <div className="w-[5px]" />
            <ScrollBar thumb="mt-8 h-[26px]" />
          </div>
        </div>
      </div>
    </div>
  );
}
